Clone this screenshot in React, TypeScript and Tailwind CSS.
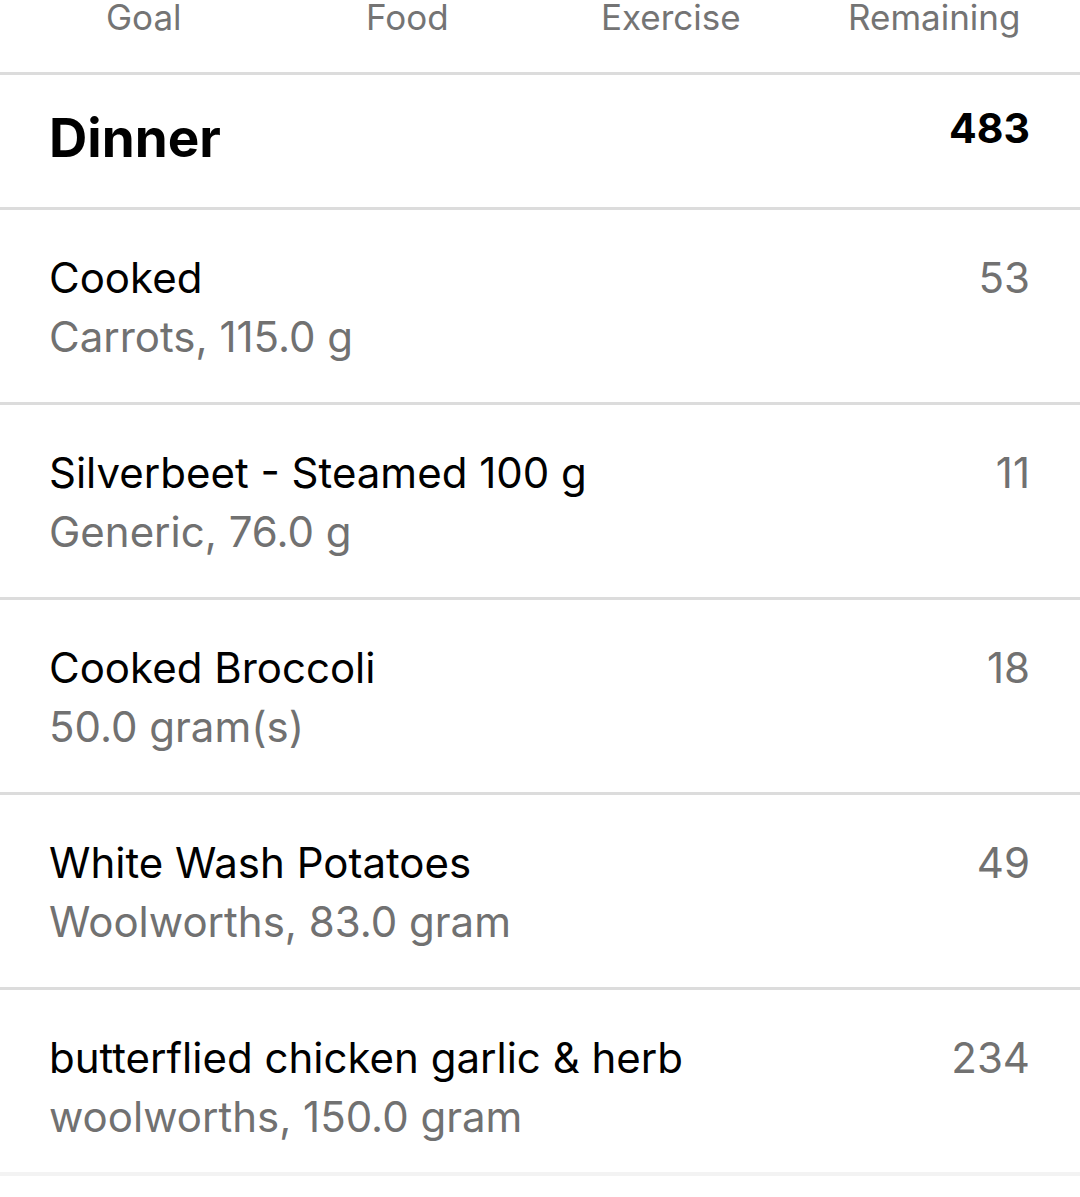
const columns = ["Goal", "Food", "Exercise", "Remaining"];

const foods = [
  { name: "Cooked", detail: "Carrots, 115.0 g", cals: 53 },
  { name: "Silverbeet - Steamed 100 g", detail: "Generic, 76.0 g", cals: 11 },
  { name: "Cooked Broccoli", detail: "50.0 gram(s)", cals: 18 },
  { name: "White Wash Potatoes", detail: "Woolworths, 83.0 gram", cals: 49 },
  { name: "butterflied chicken garlic & herb", detail: "woolworths, 150.0 gram", cals: 234 },
];

export default function App() {
  return (
    <div className="w-[1080px] h-[1197px] bg-white overflow-hidden font-['Inter',sans-serif]">
      {/* summary labels, cut off at top */}
      <div className="h-[72px] grid grid-cols-4 px-[12px] pr-[14px]">
        {columns.map((c) => (
          <div key={c} className="text-center text-[35px] leading-[35px] text-[#747474]">
            {c}
          </div>
        ))}
      </div>
      <div className="h-[3px] bg-[#dcdcdc]" />

      <div className="h-[132px] flex justify-between pl-[49px] pr-[50px]">
        <div className="pt-[28px] text-[53px] leading-[70px] font-bold text-black">Dinner</div>
        <div className="pt-[29px] text-[41px] leading-[48px] font-bold text-black">483</div>
      </div>
      <div className="h-[3px] bg-[#dcdcdc]" />

      {foods.map((f, i) => {
        const last = i === foods.length - 1;
        return (
          <div key={f.name}>
            <div
              className={
                last
                  ? "h-[182px] flex justify-between pl-[49px] pr-[50px] pt-[38px]"
                  : "h-[192px] flex justify-between pl-[49px] pr-[50px] pt-[38px]"
              }
            >
              <div className="text-[42px] leading-[59px]">
                <div className="text-black">{f.name}</div>
                <div className="text-[#717171]">{f.detail}</div>
              </div>
              <div className="text-[42px] leading-[59px] text-[#717171]">{f.cals}</div>
            </div>
            <div className={last ? "h-[4px] bg-[#f3f3f3]" : "h-[3px] bg-[#dcdcdc]"} />
          </div>
        );
      })}
    </div>
  );
}
